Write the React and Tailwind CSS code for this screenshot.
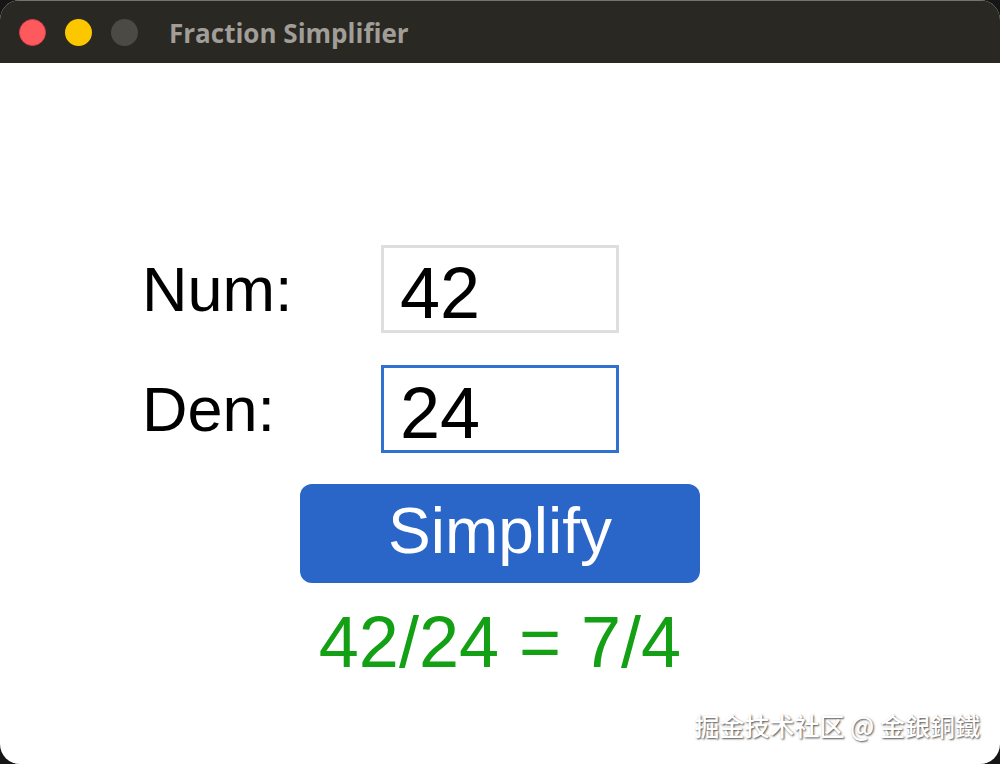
export default function App() {
  const num = 42;
  const den = 24;

  return (
    <div className="w-[1000px] h-[764px] bg-[#161616]">
      <div className="relative w-full h-full rounded-[20px] overflow-hidden bg-white flex flex-col">
        {/* title bar */}
        <div className="h-[63px] bg-[#2a2823] border-t border-[#77746d] flex items-center pl-[19px] shrink-0">
          <span className="w-[27px] h-[27px] rounded-full bg-[#fe5a5e] border border-[#d8404a]" />
          <span className="w-[27px] h-[27px] rounded-full bg-[#fdc700] ml-[19px]" />
          <span className="w-[27px] h-[27px] rounded-full bg-[#4b4a45] ml-[19px]" />
          <span className="ml-[31px] mt-[2px] text-[26px] font-bold text-[#a19e98] font-['Open_Sans',sans-serif]">
            Fraction Simplifier
          </span>
        </div>

        {/* form */}
        <div className="flex flex-col pt-[182px] font-['Liberation_Sans',Arial,sans-serif]">
          <div className="flex items-center pl-[142px]">
            <label className="w-[239px] text-[63px] leading-none text-black">Num:</label>
            <input
              readOnly
              value={num}
              className="w-[238px] h-[88px] border-[3px] border-[#dedede] pl-[16px] pt-[8px] text-[72px] leading-none text-black outline-none"
            />
          </div>
          <div className="flex items-center pl-[142px] mt-[32px]">
            <label className="w-[239px] text-[63px] leading-none text-black">Den:</label>
            <input
              readOnly
              value={den}
              className="w-[238px] h-[88px] border-[3px] border-[#3170d0] pl-[16px] pt-[8px] text-[72px] leading-none text-black outline-none"
            />
          </div>
          <div className="flex justify-center mt-[31px]">
            <button className="w-[400px] h-[99px] rounded-[12px] bg-[#2966c8] text-white text-[64px] leading-none pb-[6px]">
              Simplify
            </button>
          </div>
          <div className="text-center mt-[23px] text-[72px] leading-none text-[#14a014]">
            {num}/{den} = 7/4
          </div>
        </div>

        <span className="absolute right-[20px] bottom-[20px] text-[25px] font-medium text-white font-['Noto_Sans_CJK_SC',sans-serif] [text-shadow:1px_1px_2px_rgba(0,0,0,0.7)]">
          掘金技术社区 @ 金銀銅鐵
        </span>
      </div>
    </div>
  );
}
